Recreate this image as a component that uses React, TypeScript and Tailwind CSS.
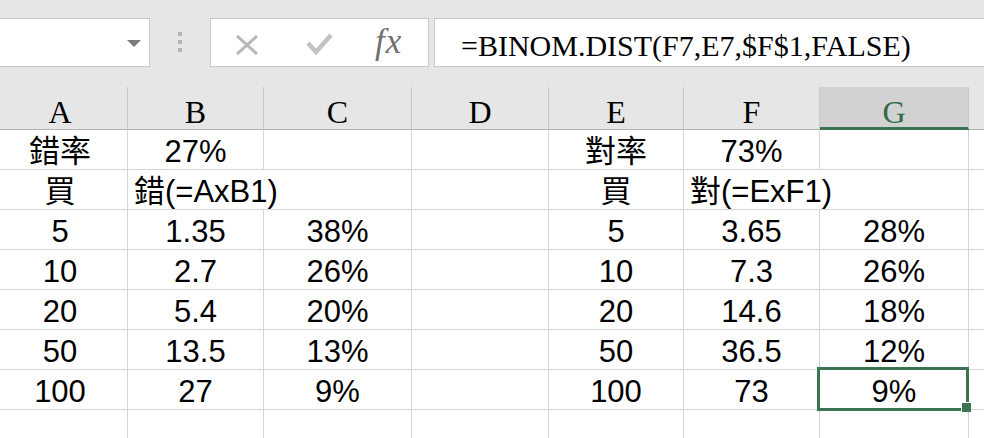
const COLS = [128, 136, 148, 137, 135, 136, 149];
const HEADERS = ["A", "B", "C", "D", "E", "F", "G"];

type Cell = { v: string; left?: boolean };

const ROWS: Cell[][] = [
  [{ v: "錯率" }, { v: "27%" }, { v: "" }, { v: "" }, { v: "對率" }, { v: "73%" }, { v: "" }],
  [{ v: "買" }, { v: "錯(=AxB1)", left: true }, { v: "" }, { v: "" }, { v: "買" }, { v: "對(=ExF1)", left: true }, { v: "" }],
  [{ v: "5" }, { v: "1.35" }, { v: "38%" }, { v: "" }, { v: "5" }, { v: "3.65" }, { v: "28%" }],
  [{ v: "10" }, { v: "2.7" }, { v: "26%" }, { v: "" }, { v: "10" }, { v: "7.3" }, { v: "26%" }],
  [{ v: "20" }, { v: "5.4" }, { v: "20%" }, { v: "" }, { v: "20" }, { v: "14.6" }, { v: "18%" }],
  [{ v: "50" }, { v: "13.5" }, { v: "13%" }, { v: "" }, { v: "50" }, { v: "36.5" }, { v: "12%" }],
  [{ v: "100" }, { v: "27" }, { v: "9%" }, { v: "" }, { v: "100" }, { v: "73" }, { v: "9%" }],
  [{ v: "" }, { v: "" }, { v: "" }, { v: "" }, { v: "" }, { v: "" }, { v: "" }],
];

function FormulaBar() {
  return (
    <div className="h-[87px] bg-[#e6e6e6] flex items-start pt-[18px] shrink-0">
      <div className="w-[150px] h-[49px] bg-white border border-l-0 border-[#c6c6c6] flex items-center justify-end pr-[8px] pt-[1px]">
        <svg width="14" height="7" viewBox="0 0 14 7">
          <polygon points="0,0 14,0 7,7" fill="#7a7a7a" />
        </svg>
      </div>
      <div className="ml-[28px] mt-[14px] flex flex-col gap-[4px]">
        <div className="w-[4px] h-[4px] bg-[#b4b4b4]" />
        <div className="w-[4px] h-[4px] bg-[#b4b4b4]" />
        <div className="w-[4px] h-[4px] bg-[#b4b4b4]" />
      </div>
      <div className="ml-[28px] w-[219px] h-[49px] bg-white border border-[#c6c6c6] flex items-center pl-[25px]">
        <svg width="22" height="20" viewBox="0 0 22 20" className="mt-[4px]">
          <path d="M1 1 L21 19 M21 1 L1 19" stroke="#b8b8b8" strokeWidth="3" fill="none" />
        </svg>
        <svg width="27" height="22" viewBox="0 0 27 22" className="ml-[48px] mt-[2px]">
          <path d="M2 10 L10 19 L25 2" stroke="#c2c2c2" strokeWidth="4.5" fill="none" />
        </svg>
        <span className="ml-[42px] mt-[-2px] font-['Liberation_Serif',serif] italic text-[35px] leading-[36px] text-[#707070] tracking-[1px]">
          fx
        </span>
      </div>
      <div className="ml-[5px] flex-1 h-[49px] bg-white border border-r-0 border-[#c6c6c6] flex items-end pl-[26px] pb-[3px]">
        <span className="font-['Liberation_Serif',serif] text-[30px] leading-[34px] text-black whitespace-nowrap">
          =BINOM.DIST(F7,E7,$F$1,FALSE)
        </span>
      </div>
    </div>
  );
}

function HeaderRow() {
  return (
    <div className="flex h-[43px] bg-[#e6e6e6] shrink-0">
      {HEADERS.map((h, i) => {
        const sel = h === "G";
        return (
          <div
            key={h}
            style={{ width: COLS[i] }}
            className={
              sel
                ? "shrink-0 flex items-end justify-center bg-[#d2d2d2] border-r border-[#c8c8c8] border-b-[3px] border-b-[#3b7450] font-['Liberation_Serif',serif] text-[32px] leading-[30px] text-[#2f6b44]"
                : "shrink-0 flex items-end justify-center border-r border-[#c8c8c8] border-b border-b-[#b4b4b4] font-['Liberation_Serif',serif] text-[32px] leading-[34px] text-black " +
                  (i === 0 ? "pr-[7px]" : "")
            }
          >
            {h}
          </div>
        );
      })}
      <div className="flex-1 border-b border-b-[#b4b4b4]" />
    </div>
  );
}

function DataRow({ cells, r }: { cells: Cell[]; r: number }) {
  return (
    <div className="flex h-[40px] shrink-0">
      {cells.map((c, i) => {
        const next = cells[i + 1];
        const overflowing = c.left;
        const selected = r === 6 && i === 6;
        return (
          <div
            key={i}
            style={{ width: COLS[i] }}
            className={
              "shrink-0 relative flex items-end border-b border-[#d4d4d4] whitespace-nowrap font-['Liberation_Sans','Noto_Sans_CJK_TC',sans-serif] text-[31px] leading-[34px] text-black " +
              (overflowing ? "justify-start pl-[6px] overflow-visible z-10 " : "justify-center ") +
              (overflowing && next && next.v === "" ? "border-r-0 " : "border-r ") +
              (i === 0 ? "pr-[7px]" : "")
            }
          >
            {c.v}
            {selected && (
              <div className="absolute top-[-3px] left-[-3px] right-[-1px] bottom-[-2px] border-[3px] border-[#3b7450] z-20">
                <div className="absolute right-[-5px] bottom-[-4px] w-[10px] h-[10px] bg-[#3b7450] border-l border-t border-white" />
              </div>
            )}
          </div>
        );
      })}
      <div className="flex-1 border-b border-[#d4d4d4]" />
    </div>
  );
}

export default function App() {
  return (
    <div className="w-[984px] h-[438px] overflow-hidden bg-white flex flex-col">
      <FormulaBar />
      <HeaderRow />
      {ROWS.map((row, r) => (
        <DataRow key={r} cells={row} r={r} />
      ))}
    </div>
  );
}
